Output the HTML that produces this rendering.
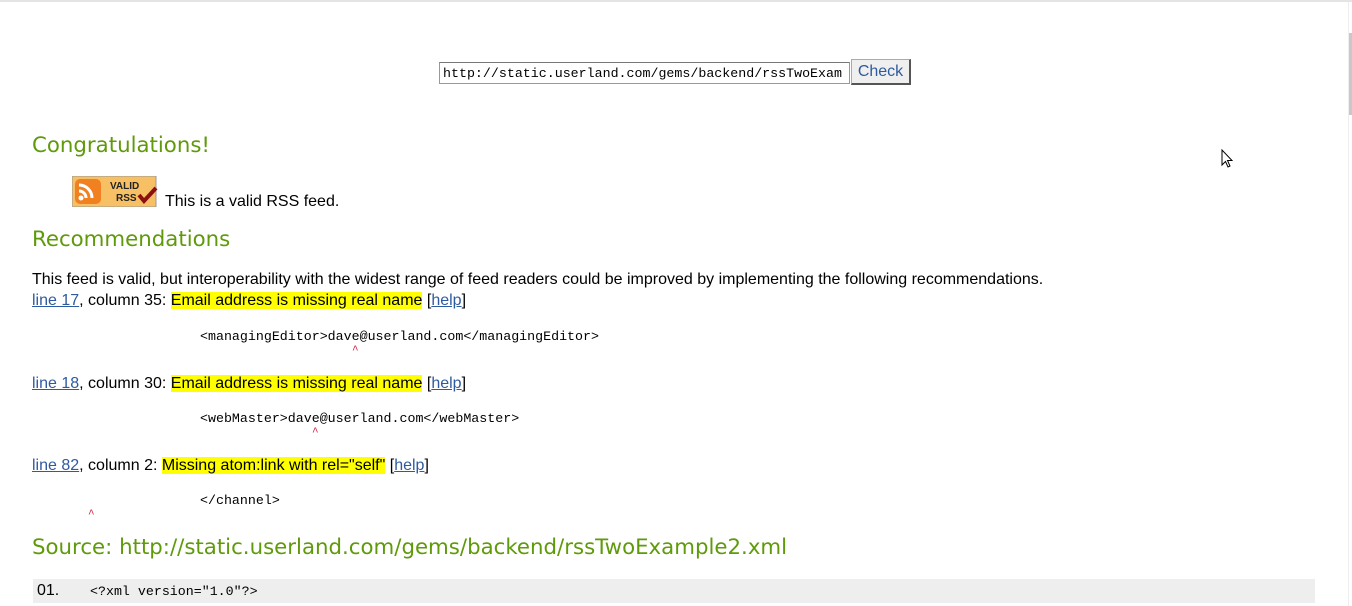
<!DOCTYPE html>
<html><head><style>
body{margin:0;width:1352px;height:606px;overflow:hidden;background:#fff;font-family:"Liberation Sans",Arial,sans-serif;font-size:16px;color:#000;position:relative}
.a{position:absolute;white-space:nowrap}
h2{margin:0;font-family:"DejaVu Sans",Verdana,sans-serif;font-weight:normal;font-size:21.3px;color:#5f9a0a;position:absolute;white-space:nowrap}
a{color:#2e5aa0}
.hl{background:#ffff00}
.code{font-family:"Liberation Mono","Courier New",monospace;font-size:13.3px;position:absolute;white-space:pre}
.car{color:#d02040;font-family:"Liberation Mono",monospace;font-size:11px;position:absolute}
</style></head><body>
<div style="position:absolute;left:0;top:0;width:1352px;height:2px;background:#e4e4e4"></div>
<div style="position:absolute;left:1349px;top:33px;width:3px;height:82px;background:#c8c8c8"></div>
<div style="position:absolute;left:1348px;top:2px;width:1px;height:604px;background:#eee"></div>
<div class="a" style="left:439px;top:62px;width:406px;height:20px;border:1px solid #999;border-top-color:#777;font-family:'Liberation Mono',monospace;font-size:13.3px;line-height:21px;padding-left:3px;overflow:hidden">http://static.userland.com/gems/backend/rssTwoExam</div>
<div class="a" style="left:851px;top:59px;width:57px;height:23px;background:#efefef;border:1px solid #aaa;border-right:2px solid #555;border-bottom:2px solid #555;color:#2e5aa0;text-align:center;font-size:16px;line-height:23px">Check</div>
<svg style="position:absolute;left:1221px;top:149px" width="14" height="20" viewBox="0 0 14 20"><path d="M1 1 L1 16 L4.5 12.5 L7 18 L9 17 L6.5 11.5 L11 11.5 Z" fill="#fff" stroke="#000"/></svg>
<h2 style="left:32px;top:133px">Congratulations!</h2>
<svg style="position:absolute;left:72px;top:176px" width="86" height="31" viewBox="0 0 86 31">
<rect x="0" y="0" width="84" height="31" fill="#f8c064" stroke="#999"/>
<rect x="3" y="3" width="26" height="25" rx="5" fill="#f08020"/>
<circle cx="9" cy="22" r="2.5" fill="#fff"/>
<path d="M7 15 a7 7 0 0 1 7 7" stroke="#fff" stroke-width="3" fill="none"/>
<path d="M7 9 a13 13 0 0 1 13 13" stroke="#fff" stroke-width="3" fill="none"/>
<text x="38" y="13" font-family="Liberation Sans" font-weight="bold" font-size="10" fill="#222">VALID</text>
<text x="44" y="25" font-family="Liberation Sans" font-weight="bold" font-size="10" fill="#222">RSS</text>
<path d="M67 19 l5 6 l12 -13" stroke="#8b1010" stroke-width="4" fill="none"/>
</svg>
<div class="a" style="left:165px;top:193px">This is a valid RSS feed.</div>
<h2 style="left:32px;top:227px">Recommendations</h2>
<div class="a" style="left:32px;top:271px">This feed is valid, but interoperability with the widest range of feed readers could be improved by implementing the following recommendations.</div>
<div class="a" style="left:32px;top:292px"><a href="#">line 17</a>, column 35: <span class="hl">Email address is missing real name</span> [<a href="#">help</a>]</div>
<div class="code" style="left:200px;top:329px">&lt;managingEditor&gt;dave@userland.com&lt;/managingEditor&gt;</div>
<div class="car" style="left:352px;top:345px">^</div>
<div class="a" style="left:32px;top:375px"><a href="#">line 18</a>, column 30: <span class="hl">Email address is missing real name</span> [<a href="#">help</a>]</div>
<div class="code" style="left:200px;top:411px">&lt;webMaster&gt;dave@userland.com&lt;/webMaster&gt;</div>
<div class="car" style="left:312px;top:427px">^</div>
<div class="a" style="left:32px;top:457px"><a href="#">line 82</a>, column 2: <span class="hl">Missing atom:link with rel="self"</span> [<a href="#">help</a>]</div>
<div class="code" style="left:200px;top:493px">&lt;/channel&gt;</div>
<div class="car" style="left:88px;top:509px">^</div>
<h2 style="left:32px;top:535px">Source: http://static.userland.com/gems/backend/rssTwoExample2.xml</h2>
<div style="position:absolute;left:33px;top:579px;width:1282px;height:24px;background:#eee"></div>
<div class="a" style="left:37px;top:582px">01.</div>
<div class="code" style="left:90px;top:584px">&lt;?xml version="1.0"?&gt;</div>
</body></html>
